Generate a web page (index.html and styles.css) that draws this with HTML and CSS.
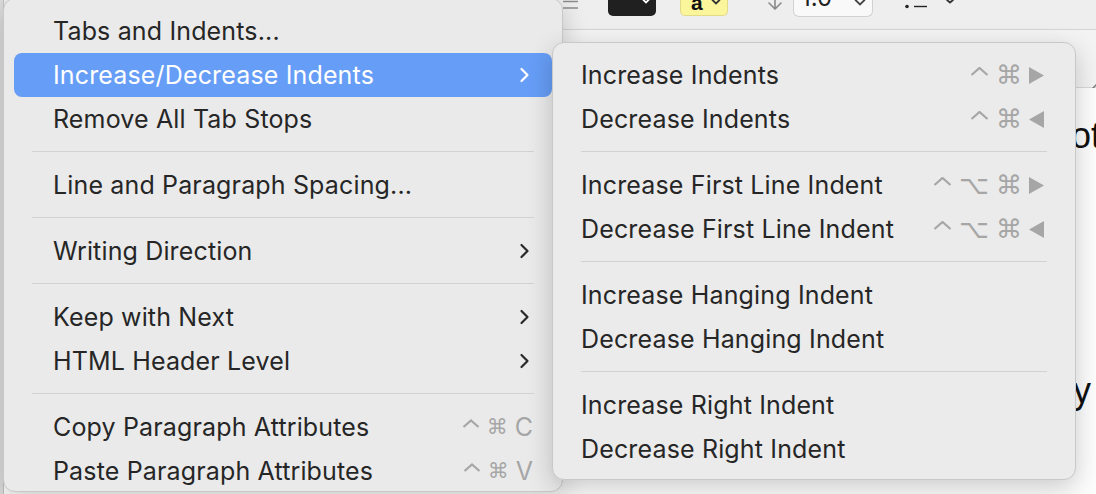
FILE: index.html
```html
<!DOCTYPE html>
<html lang="en">
<head>
  <meta charset="UTF-8" />
  <title>Format Menu</title>
  <link rel="stylesheet" href="styles.css">
</head>
<body>
  <div class="window">
    <div class="toolbar">
      <svg class="tb-lines" width="15" height="10" viewBox="0 0 15 10">
        <path d="M0 1.5H15M0 8H15" stroke="#8c8c8c" stroke-width="1.4" />
      </svg>
      <div class="well well-black">
        <svg width="10" height="4" viewBox="0 0 10 4"><path d="M1.5 -1L5 2.5L8.5 -1" fill="none" stroke="#fff" stroke-width="1.8" stroke-linecap="round" /></svg>
      </div>
      <div class="well well-yellow">
        <span class="well-letter">a</span>
        <svg width="10" height="5" viewBox="0 0 10 5"><path d="M1.5 0L5 3.5L8.5 0" fill="none" stroke="#333" stroke-width="1.8" stroke-linecap="round" /></svg>
      </div>
      <svg class="tb-arrow" width="16" height="10" viewBox="0 0 16 10">
        <path d="M8 -4V9M2 3L8 9L14 3" fill="none" stroke="#8a8a8a" stroke-width="1.6" stroke-linecap="round" />
      </svg>
      <div class="spacing-select">
        <span class="select-value">1.0</span>
        <svg width="12" height="6" viewBox="0 0 12 6"><path d="M1.5 0L6 4.5L10.5 0" fill="none" stroke="#444" stroke-width="1.8" stroke-linecap="round" /></svg>
      </div>
      <svg class="tb-list" width="24" height="10" viewBox="0 0 24 10">
        <circle cx="3" cy="6.5" r="1.8" fill="#222" />
        <path d="M10 6.5H23" stroke="#222" stroke-width="1.4" />
      </svg>
      <svg class="tb-more" width="8" height="4" viewBox="0 0 8 4"><path d="M1 0L4 2.5L7 0" fill="none" stroke="#333" stroke-width="1.8" stroke-linecap="round" /></svg>
    </div>

    <div class="ruler">
      <svg class="ruler-mark" width="14" height="14" viewBox="0 0 14 14"><path d="M1 13L13 1" stroke="#7a7a7a" stroke-width="1.5" /></svg>
    </div>

    <div class="document">
      <p class="doc-line line-one">not</p>
      <p class="doc-line line-two">every</p>
    </div>
  </div>

  <div class="menu menu-main">
    <div class="item">Tabs and Indents...</div>
    <div class="item selected">
      <span class="label">Increase/Decrease Indents</span>
      <svg class="chevron" width="11" height="16" viewBox="0 0 11 16"><path d="M2.5 2L8.5 8L2.5 14" /></svg>
    </div>
    <div class="item">Remove All Tab Stops</div>
    <div class="sep"></div>
    <div class="item">Line and Paragraph Spacing...</div>
    <div class="sep"></div>
    <div class="item">
      <span class="label">Writing Direction</span>
      <svg class="chevron" width="11" height="16" viewBox="0 0 11 16"><path d="M2.5 2L8.5 8L2.5 14" /></svg>
    </div>
    <div class="sep"></div>
    <div class="item">
      <span class="label">Keep with Next</span>
      <svg class="chevron" width="11" height="16" viewBox="0 0 11 16"><path d="M2.5 2L8.5 8L2.5 14" /></svg>
    </div>
    <div class="item">
      <span class="label">HTML Header Level</span>
      <svg class="chevron" width="11" height="16" viewBox="0 0 11 16"><path d="M2.5 2L8.5 8L2.5 14" /></svg>
    </div>
    <div class="sep"></div>
    <div class="item">
      <span class="label">Copy Paragraph Attributes</span>
      <span class="keys keys-small">
        <span class="key"><svg class="ctrl" width="18" height="9" viewBox="0 0 18 9"><path d="M1.5 8L9 1.5L16.5 8" /></svg></span>
        <span class="key">⌘</span>
        <span class="key key-letter">C</span>
      </span>
    </div>
    <div class="item">
      <span class="label">Paste Paragraph Attributes</span>
      <span class="keys keys-small">
        <span class="key"><svg class="ctrl" width="18" height="9" viewBox="0 0 18 9"><path d="M1.5 8L9 1.5L16.5 8" /></svg></span>
        <span class="key">⌘</span>
        <span class="key key-letter">V</span>
      </span>
    </div>
  </div>

  <div class="menu menu-sub">
    <div class="item">
      <span class="label">Increase Indents</span>
      <span class="keys">
        <span class="key"><svg class="ctrl" width="19" height="9" viewBox="0 0 19 9"><path d="M1.5 8L9.5 1L17.5 8" /></svg></span>
        <span class="key">⌘</span>
        <span class="key"><svg class="arrow" width="15" height="17" viewBox="0 0 15 17"><path d="M0 0L15 8.5L0 17Z" /></svg></span>
      </span>
    </div>
    <div class="item">
      <span class="label">Decrease Indents</span>
      <span class="keys">
        <span class="key"><svg class="ctrl" width="19" height="9" viewBox="0 0 19 9"><path d="M1.5 8L9.5 1L17.5 8" /></svg></span>
        <span class="key">⌘</span>
        <span class="key"><svg class="arrow" width="15" height="17" viewBox="0 0 15 17"><path d="M15 0L0 8.5L15 17Z" /></svg></span>
      </span>
    </div>
    <div class="sep"></div>
    <div class="item">
      <span class="label">Increase First Line Indent</span>
      <span class="keys">
        <span class="key"><svg class="ctrl" width="19" height="9" viewBox="0 0 19 9"><path d="M1.5 8L9.5 1L17.5 8" /></svg></span>
        <span class="key">⌥</span>
        <span class="key">⌘</span>
        <span class="key"><svg class="arrow" width="15" height="17" viewBox="0 0 15 17"><path d="M0 0L15 8.5L0 17Z" /></svg></span>
      </span>
    </div>
    <div class="item">
      <span class="label">Decrease First Line Indent</span>
      <span class="keys">
        <span class="key"><svg class="ctrl" width="19" height="9" viewBox="0 0 19 9"><path d="M1.5 8L9.5 1L17.5 8" /></svg></span>
        <span class="key">⌥</span>
        <span class="key">⌘</span>
        <span class="key"><svg class="arrow" width="15" height="17" viewBox="0 0 15 17"><path d="M15 0L0 8.5L15 17Z" /></svg></span>
      </span>
    </div>
    <div class="sep"></div>
    <div class="item">Increase Hanging Indent</div>
    <div class="item">Decrease Hanging Indent</div>
    <div class="sep"></div>
    <div class="item">Increase Right Indent</div>
    <div class="item">Decrease Right Indent</div>
  </div>
</body>
</html>
```

FILE: styles.css
```css
:root {
  --menu-bg: #ebebeb;
  --menu-text: #262626;
  --key-gray: #a6a6a6;
  --sep: #d2d2d2;
  --accent: #669df6;
}

* {
  box-sizing: border-box;
}

html, body {
  margin: 0;
  height: 100%;
  overflow: hidden;
}

body {
  background-color: #dcdcdc;
  font-family: Inter, "Noto Sans", sans-serif;
}

/* window behind the menus */
.window {
  margin-left: 3px;
  height: 100%;
  border-left: 1px solid #c2c2c2;
  background-color: #f2f2f2;
  display: flex;
  flex-direction: column;
}

.toolbar {
  height: 30px;
  flex-shrink: 0;
  display: flex;
  align-items: flex-start;
  padding-left: 559px;
  background-color: #eeeeee;
  border-bottom: 1px solid #d4d4d4;
}

.well {
  width: 48px;
  height: 16px;
  border-radius: 0 0 5px 5px;
  display: flex;
  align-items: flex-start;
}

.well-black {
  margin-left: 30px;
  justify-content: flex-end;
  padding-right: 5px;
  background-color: #202020;
}

.well-yellow {
  margin-left: 24px;
  padding: 0 6px 0 10px;
  justify-content: space-between;
  background-color: #fbf59c;
  border: 1px solid #e2db88;
  border-top: none;
}

.well-letter {
  margin-top: -8px;
  font-family: "Liberation Sans", sans-serif;
  font-size: 21px;
  font-weight: bold;
  line-height: 21px;
  color: #111;
}

.tb-arrow {
  margin-left: 39px;
}

.spacing-select {
  width: 80px;
  height: 17px;
  margin-left: 10px;
  display: flex;
  align-items: flex-start;
  justify-content: space-between;
  padding: 0 6px 0 7px;
  background-color: #f9f9f9;
  border: 1px solid #d2d2d2;
  border-top: none;
  border-radius: 0 0 6px 6px;
}

.select-value {
  margin-top: -14px;
  font-size: 24px;
  line-height: 24px;
  color: #222;
}

.tb-list {
  margin-left: 31px;
}

.tb-more {
  margin-left: 18px;
}

.ruler {
  height: 58px;
  flex-shrink: 0;
  display: flex;
  justify-content: flex-end;
  align-items: flex-start;
  padding-top: 50px;
  background-color: #f3f3f3;
  border-bottom: 1px solid #d9d9d9;
}

.ruler-mark {
  margin-right: -5px;
}

.document {
  flex: 1;
  background-color: #fdfdfd;
  padding-top: 26px;
}

.doc-line {
  margin: 0;
  font-family: "Liberation Sans", sans-serif;
  font-size: 36px;
  line-height: 44px;
  color: #111;
  white-space: nowrap;
  text-align: right;
}

.line-one {
  margin-right: -5px;
}

.line-two {
  margin-top: 211px;
  padding-right: 5px;
}

/* menus */
.menu {
  position: absolute;
  background-color: var(--menu-bg);
  border: 1px solid #c8c8c8;
  border-radius: 12px;
  box-shadow: 0 8px 26px rgba(0, 0, 0, 0.2);
  color: var(--menu-text);
  font-size: 25px;
  letter-spacing: 0.15px;
}

.menu-main {
  left: 3px;
  top: -2px;
  width: 560px;
  height: 494px;
  padding-top: 10px;
  overflow: hidden;
  background-color: #eaeaea;
}

.menu-sub {
  left: 552px;
  top: 42px;
  width: 524px;
  padding: 10px 0 8px;
}

.item {
  height: 44px;
  margin: 0 10px;
  display: flex;
  align-items: center;
  justify-content: space-between;
  border-radius: 8px;
  white-space: nowrap;
}

.menu-main .item {
  padding: 0 22px 0 39px;
}

.menu-sub .item {
  padding: 0 21px 0 18px;
}

.item.selected {
  background-color: var(--accent);
  color: #fff;
}

.chevron path {
  fill: none;
  stroke: #2a2a2a;
  stroke-width: 2.2;
  stroke-linecap: round;
  stroke-linejoin: round;
}

.selected .chevron path {
  stroke: #fff;
}

.sep {
  height: 1px;
  margin: 10px 28px 11px;
  background-color: var(--sep);
}

/* keyboard shortcuts */
.keys {
  display: flex;
  align-items: center;
  gap: 7px;
  color: var(--key-gray);
  font-family: "DejaVu Sans", sans-serif;
  font-size: 26px;
  line-height: 26px;
  letter-spacing: 0;
}

.key {
  display: flex;
  justify-content: center;
}

.ctrl {
  margin-top: -7px;
}

.ctrl path {
  fill: none;
  stroke: var(--key-gray);
  stroke-width: 2.2;
}

.arrow path {
  fill: var(--key-gray);
}

.keys-small {
  gap: 7px;
  margin-right: -3px;
}

.keys-small .key {
  font-size: 21px;
}

.keys-small .key-letter {
  font-family: Inter, sans-serif;
  font-size: 25px;
}
```
